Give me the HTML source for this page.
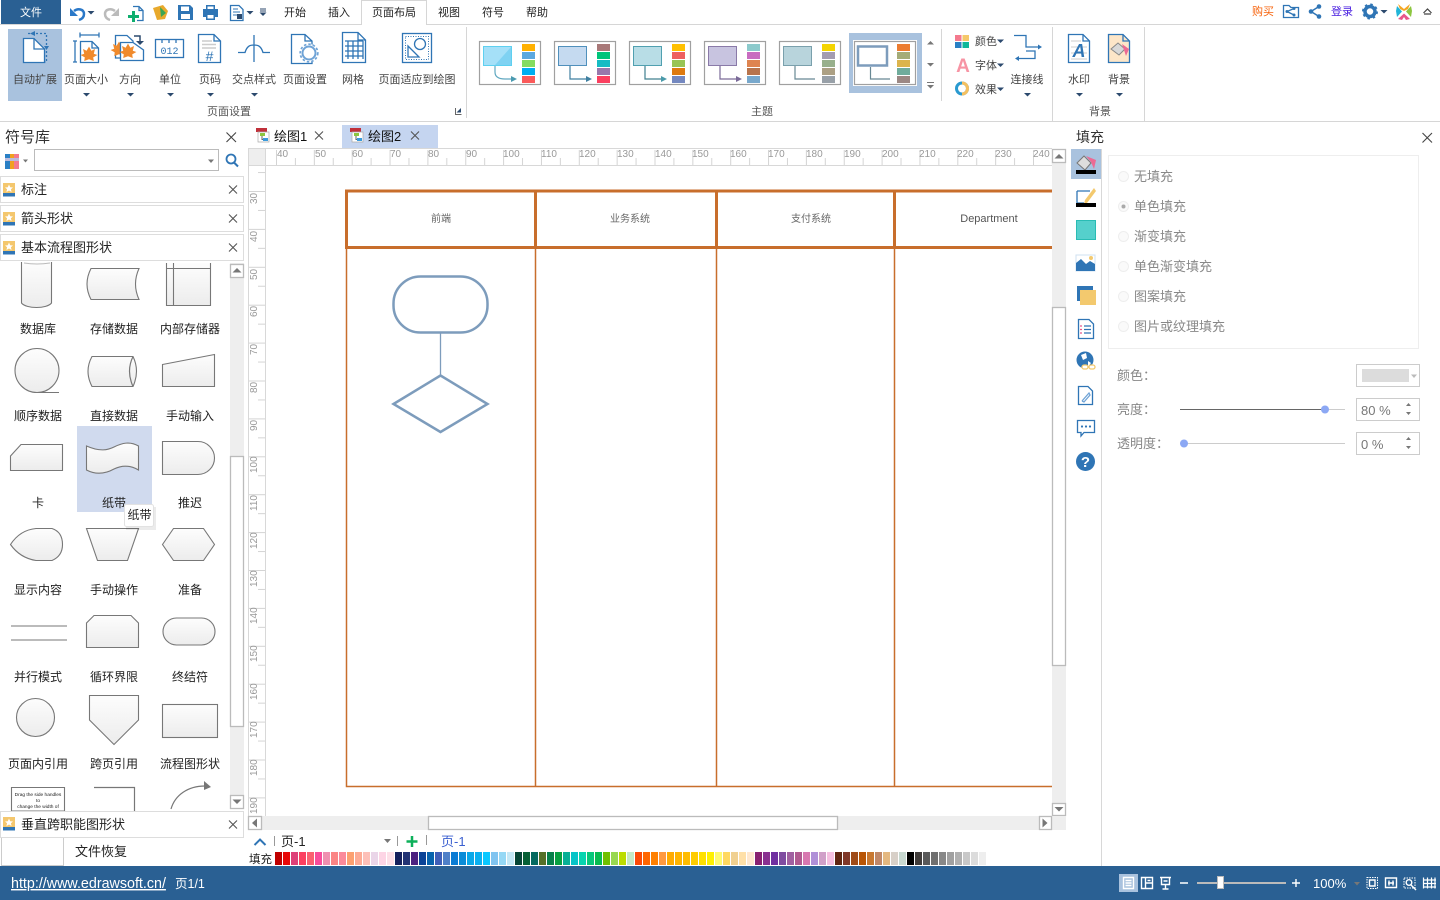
<!DOCTYPE html>
<html lang="zh"><head><meta charset="utf-8"><title>Edraw</title>
<style>
html,body{margin:0;padding:0;background:#fff;width:1440px;height:900px;overflow:hidden}
svg{display:block;font-family:"Liberation Sans","Noto Sans CJK SC",sans-serif}
text{fill:#333;font-size:11px}
.m{text-anchor:middle}
.r{font-size:11px;fill:#444}
.n{font-size:12px;fill:#222;text-anchor:middle}
.h{font-size:13px;fill:#222}
.g{font-size:13px;fill:#888}
.u{font-size:10px;fill:#999}
.b{fill:none;stroke:#2f75b5;stroke-width:1.3}
.p{fill:#fff;stroke:#2f75b5;stroke-width:1.3}
.sh{fill:url(#sg);stroke:#777;stroke-width:1.1}
.x{fill:none;stroke:#555;stroke-width:1.2}
.o{fill:#f08a2c}
.s{y:852px;width:7px;height:13px}
.w{fill:#fff;font-size:13px}
.wi{fill:none;stroke:#fff;stroke-width:1.4}
.bar{fill:#fff;stroke:#bbb;stroke-width:1.3}
.ar{fill:#777}
.d{fill:#2c4a6e}
</style></head><body>
<svg width="1440" height="900" viewBox="0 0 1440 900" xmlns="http://www.w3.org/2000/svg">
<defs>
<linearGradient id="sg" x1="0" y1="0" x2="0" y2="1"><stop offset="0" stop-color="#fdfdfd"/><stop offset="1" stop-color="#ececec"/></linearGradient>
<pattern id="hr" x="276" y="149" width="37.85" height="16" patternUnits="userSpaceOnUse"><path d="M.5 1V16M19.4 9V16" stroke="#d4d4d4" fill="none"/></pattern>
<pattern id="vr" x="248" y="191" width="17" height="37.9" patternUnits="userSpaceOnUse"><path d="M1 .5H17M10 19.4H17" stroke="#d4d4d4" fill="none"/></pattern>
<g id="leaf"><path class="o" transform="scale(1.2)" d="M0-7L2-3.500 5-5 4-1 7 0 3.500 2 4 5 0 3.500-4 5-3.500 2-7 0-4-1-5-5-2-3.500Z"/></g>
<g id="star"><rect x="0" y="0" width="12" height="10" fill="#f4c76e"/><rect x="0" y="10" width="12" height="3.500" fill="#2f75b5"/><path fill="#fff" d="M6 1.500L7.200 4.300 10 4.500 7.900 6.300 8.600 9 6 7.500 3.400 9 4.100 6.300 2 4.500 4.800 4.300Z"/></g>
<g id="di"><path fill="#c0303a" d="M-7-7h11v4h-11z"/><path fill="#fff" stroke="#aaa" stroke-width=".7" d="M-5-3H6V7H-5Z"/><path fill="#8cc63f" d="M-3-2h5v3h-5z"/><path fill="#3a9bdc" d="M0 3h5v3H0z"/><path stroke="#666" fill="none" d="M-1 1V4.500H0"/></g>
<g id="ts"><path fill="#2c4a6e" d="M-3.500 0H3.500L0 3.500Z"/></g>
<g id="tick"><path class="ar" d="M-4 0H4L0 3.500Z"/></g>
<g id="xx"><path d="M-4-4L4 4M4-4L-4 4" stroke="#555" stroke-width="1.100" fill="none"/></g>
</defs>

<!-- Top bar -->
<rect x="1" y="0" width="60" height="24" fill="#2a6093"/>
<text x="31" y="16" class="m" style="fill:#fff;font-size:11px">文件</text>
<path d="M0 24.500H361M427 24.500H1440" stroke="#d6d6d6"/>
<path d="M361.500 25V.5H426.500V25" fill="#fff" stroke="#d6d6d6"/>
<text x="295" y="16" class="m" style="fill:#222">开始</text>
<text x="339" y="16" class="m" style="fill:#222">插入</text>
<text x="394" y="16" class="m" style="fill:#222">页面布局</text>
<text x="449" y="16" class="m" style="fill:#222">视图</text>
<text x="493" y="16" class="m" style="fill:#222">符号</text>
<text x="537" y="16" class="m" style="fill:#222">帮助</text>

<!-- Quick access -->
<path d="M74 11C78 8 84 9 84 14 84 17 82 19 79 20" fill="none" stroke="#2a78c8" stroke-width="2.500"/><path fill="#2a78c8" d="M70 8V16H78Z"/>
<use href="#ts" x="91" y="11"/>
<path d="M115 11C111 8 105 9 105 14 105 17 107 19 110 20" fill="none" stroke="#bbb" stroke-width="2.500"/><path fill="#bbb" d="M119 8V16H111Z"/>
<path class="b" d="M133 6.500H139L143 10.500V20.500H137"/><path class="b" d="M139 6.500V10.500H143"/>
<path fill="#0fae6e" d="M132 11h3v4h4v3h-4v4h-3v-4h-4v-3h4z"/>
<path fill="#e8a92c" d="M153 8L163 5 168 11 165 19 157 20Z"/><path fill="#3aa655" d="M160 7L166 13 161 17Z"/>
<path fill="#2f75b5" d="M178 5H190L193 8V20H178Z"/><path fill="#fff" d="M181 6.500H189V11H181ZM181 14H190V19H181Z"/>
<path fill="#2f75b5" d="M206 5H215V9H218V17H215V20H206V17H203V9H206Z"/><path fill="#fff" d="M207.500 6.500H213.500V9H207.500ZM207.500 15H213.500V18.500H207.500Z"/>
<path class="p" d="M230.500 5.500H239L243 9.500V20.500H230.500Z"/><path d="M233 9h5M233 12h7M233 15h4" stroke="#2f75b5" fill="none"/><path fill="#2c4a6e" d="M237 14h5v5h-5z"/>
<use href="#ts" x="250" y="11"/>
<path d="M260 9h6M260 11h6" stroke="#2c4a6e"/><use href="#ts" x="263" y="12.500"/>

<!-- Top right -->
<text x="1263" y="15" class="m" style="fill:#f7630c">购买</text>
<path class="b" d="M1283.500 5.500H1289L1291 7.500H1298.500V17.500H1283.500Z"/>
<circle cx="1287" cy="11.500" r="1.500" fill="#2f75b5"/><circle cx="1294" cy="8.500" r="1.500" fill="#2f75b5"/><circle cx="1294" cy="15" r="1.500" fill="#2f75b5"/><path class="b" d="M1294 8.500L1287 11.500 1294 15"/>
<circle cx="1311" cy="11.500" r="2.300" fill="#2f75b5"/><circle cx="1319" cy="6.500" r="2.300" fill="#2f75b5"/><circle cx="1319" cy="16.500" r="2.300" fill="#2f75b5"/><path d="M1319 6.500L1311 11.500 1319 16.500" fill="none" stroke="#2f75b5" stroke-width="1.500"/>
<text x="1342" y="15" class="m" style="fill:#4a1fe0">登录</text>
<circle cx="1370" cy="11.500" r="5" fill="none" stroke="#2f75b5" stroke-width="3.500"/><circle cx="1370" cy="11.500" r="7" fill="none" stroke="#2f75b5" stroke-width="2" stroke-dasharray="2.500 3"/>
<use href="#ts" x="1384" y="10"/>
<path fill="#f5a623" d="M1398 4L1404 9 1410 4 1408 9 1404 11 1400 9Z"/><path fill="#8cc63f" d="M1411 6L1406 11.500 1411 17 1412 11Z"/><path fill="#e8568a" d="M1398 19L1404 13.500 1410 19 1406 20 1404 17 1402 20Z"/><path fill="#22b5d8" d="M1397 6L1402 11.500 1397 17 1396 11Z"/>
<path d="M1423.500 13L1427.500 9 1431.500 13M1424 14H1431" fill="none" stroke="#444" stroke-width="1.200"/>

<!-- Ribbon -->
<path d="M0 121.500H1440" stroke="#d6d6d6"/>
<path d="M466.500 27V118M941.500 29V101M1052.500 27V121M1144.500 27V121" stroke="#d6d6d6"/>
<rect x="8" y="29" width="54" height="72" fill="#a9c2de"/>
<path class="p" d="M23.500 38.500H34L44.500 49V62.500H23.500Z"/><path class="b" d="M34 38.500V49H44.500"/>
<path class="b" d="M28 33.500H46.500V62H44" stroke-dasharray="2 2"/><path fill="#2f75b5" d="M30 33.500L35 31V36ZM46.500 50L44 46H49Z"/>
<!-- 页面大小 -->
<path class="b" d="M80 35H99M80 32.500V37.500M99 32.500V37.500M75 41V62M73 41H77M73 62H77"/>
<path class="p" d="M80.500 41.500H92L98.500 48V62.500H80.500Z"/><path class="b" d="M92 41.500V48H98.500"/>
<use href="#leaf" x="89" y="55"/>
<!-- 方向 -->
<path class="p" d="M115.500 35.500H127L133 41V58H115.500Z"/><use href="#leaf" x="119" y="50"/>
<path class="p" d="M120.500 42.500H133L143.500 50V60.500H120.500Z"/><use href="#leaf" x="128" y="52"/>
<path d="M134 36H140V42" fill="none" stroke="#2c4a6e" stroke-width="1.500"/><path fill="#2c4a6e" d="M136 41H144L140 45Z"/>
<!-- 单位 -->
<rect x="155.500" y="39.500" width="28" height="18" class="p"/>
<path class="b" d="M162 40V43M169 40V43M176 40V43"/>
<text x="169.500" y="54" class="m" style="font-family:'Liberation Mono',monospace;font-size:10px;fill:#2f75b5">012</text>
<!-- 页码 -->
<path class="p" d="M198.500 34.500H214L220.500 41V62.500H198.500Z"/><path class="b" d="M214 34.500V41H220.500"/>
<path d="M202 41H212M202 44.500H216M202 48H216" stroke="#ccc" stroke-width="1.500"/>
<text x="209.500" y="61" class="m" style="font-size:14px;fill:#2f75b5">#</text>
<!-- 交点样式 -->
<path class="b" d="M254 35V62M238 52.500H245C247 46 250 45 254 45S261 46 263 52.500H270"/>
<!-- 页面设置 -->
<path class="p" d="M291.500 34.500H305L312 41V63.500H291.500Z"/><path class="b" d="M305 34.500V41H312"/>
<circle cx="309" cy="53" r="9" fill="#fff"/><circle cx="309" cy="53" r="6.500" fill="none" stroke="#6fa3d6" stroke-width="2"/><circle cx="309" cy="53" r="8.800" fill="none" stroke="#6fa3d6" stroke-width="1.700" stroke-dasharray="2.500 2"/>
<!-- 网格 -->
<path class="p" d="M342.500 32.500H358L365.500 40V62.500H342.500Z"/><path class="b" d="M358 32.500V40H365.500"/>
<path class="b" d="M345 41H363M345 46H363M345 51H363M345 56H363M348 41V59M353 41V59M358 41V59M363 41V59"/>
<!-- 页面适应 -->
<rect x="402.500" y="33.500" width="29" height="29" class="p"/>
<rect x="405.500" y="36.500" width="23" height="23" fill="none" stroke="#2f75b5" stroke-dasharray="1 1.500"/>
<circle cx="420" cy="44" r="5.500" class="p"/><path class="p" d="M408 57V46L419 57Z"/>
<!-- Ribbon labels -->
<text x="35" y="83" class="r m">自动扩展</text>
<text x="86" y="83" class="r m">页面大小</text>
<text x="130" y="83" class="r m">方向</text>
<text x="170" y="83" class="r m">单位</text>
<text x="210" y="83" class="r m">页码</text>
<text x="254" y="83" class="r m">交点样式</text>
<text x="305" y="83" class="r m">页面设置</text>
<text x="353" y="83" class="r m">网格</text>
<text x="417" y="83" class="r m">页面适应到绘图</text>
<use href="#ts" x="86.500" y="93"/><use href="#ts" x="130.500" y="93"/><use href="#ts" x="170.500" y="93"/><use href="#ts" x="210.500" y="93"/><use href="#ts" x="254.500" y="93"/>
<text x="229" y="115" class="r m" style="fill:#555">页面设置</text>
<path d="M455.500 108V114.500H461.500" fill="none" stroke="#666"/><path fill="#2c4a6e" d="M457 108L461.500 112.500V108Z" transform="rotate(90 459 110)"/>

<!-- Themes -->
<rect x="849" y="33" width="73" height="60" fill="#a9c2de"/>
<rect x="853" y="40" width="64" height="46" fill="#fff"/>
<g fill="#fff" stroke="#a0a0a0" stroke-width="1.200">
<rect x="479.500" y="41.500" width="61" height="43"/><rect x="554.500" y="41.500" width="61" height="43"/><rect x="629.500" y="41.500" width="61" height="43"/><rect x="704.500" y="41.500" width="61" height="43"/><rect x="779.500" y="41.500" width="61" height="43"/><rect x="854.500" y="41.500" width="61" height="43"/>
</g>
<path fill="#a5e0f8" stroke="#5ed0f0" d="M483.500 46.500H511.500V65.500H483.500Z"/><path fill="#7fd2f2" d="M495 65L511 47V65Z"/>
<path fill="none" stroke="#60a8c0" stroke-width="1.200" d="M495 66V72Q495 79 505 79H515"/><path fill="#4a9ab0" d="M511 76L517 79 511 82Z"/>
<path fill="#c5daf0" stroke="#5090bc" d="M558.500 46.500H586.500V65.500H558.500Z"/><path fill="none" stroke="#3f7fa0" stroke-width="1.200" d="M570 66V79H590"/><path fill="#3f7fa0" d="M586 76L592 79 586 82Z"/>
<path fill="#b8dde6" stroke="#50a0b0" d="M633.500 46.500H661.500V65.500H633.500Z"/><path fill="none" stroke="#40808f" stroke-width="1.200" d="M645 66V79H665"/><path fill="#4a9aaa" d="M661 76L667 79 661 82Z"/>
<path fill="#c8c4e0" stroke="#8a7aa8" d="M708.500 46.500H736.500V65.500H708.500Z"/><path fill="none" stroke="#7a6a98" stroke-width="1.200" d="M720 66V79H740"/><path fill="#7a6a98" d="M736 76L742 79 736 82Z"/>
<path fill="#b8d4dc" stroke="#7aa0ac" d="M783.500 46.500H811.500V65.500H783.500Z"/><path fill="none" stroke="#688894" stroke-width="1.200" d="M795 66V79H815"/>
<path fill="#fff" stroke="#7d9cbc" stroke-width="2.500" d="M858 46.500H887V65.500H858Z"/><path fill="none" stroke="#688894" stroke-width="1.200" d="M870.500 67V79H890"/>
<g>
<rect x="522" y="44" width="13" height="7" fill="#ffb000"/><rect x="522" y="52" width="13" height="7" fill="#5ba8e0"/><rect x="522" y="60" width="13" height="7" fill="#84dc60"/><rect x="522" y="68" width="13" height="7" fill="#00aef0"/><rect x="522" y="76" width="13" height="7" fill="#fb5a5a"/>
<rect x="597" y="44" width="13" height="7" fill="#a87878"/><rect x="597" y="52" width="13" height="7" fill="#00c47a"/><rect x="597" y="60" width="13" height="7" fill="#15bcc4"/><rect x="597" y="68" width="13" height="7" fill="#9878ac"/><rect x="597" y="76" width="13" height="7" fill="#fb4060"/>
<rect x="672" y="44" width="13" height="7" fill="#ffc000"/><rect x="672" y="52" width="13" height="7" fill="#ee6060"/><rect x="672" y="60" width="13" height="7" fill="#98c454"/><rect x="672" y="68" width="13" height="7" fill="#de7a10"/><rect x="672" y="76" width="13" height="7" fill="#7488c0"/>
<rect x="747" y="44" width="13" height="7" fill="#8ccacc"/><rect x="747" y="52" width="13" height="7" fill="#c86cc0"/><rect x="747" y="60" width="13" height="7" fill="#de8450"/><rect x="747" y="68" width="13" height="7" fill="#b8744c"/><rect x="747" y="76" width="13" height="7" fill="#78a8cc"/>
<rect x="822" y="44" width="13" height="7" fill="#f4d400"/><rect x="822" y="52" width="13" height="7" fill="#a49cb0"/><rect x="822" y="60" width="13" height="7" fill="#98b08c"/><rect x="822" y="68" width="13" height="7" fill="#aca084"/><rect x="822" y="76" width="13" height="7" fill="#98a0a8"/>
<rect x="897" y="44" width="13" height="7" fill="#ec7c30"/><rect x="897" y="52" width="13" height="7" fill="#a4ac78"/><rect x="897" y="60" width="13" height="7" fill="#dcb44c"/><rect x="897" y="68" width="13" height="7" fill="#70ac9c"/><rect x="897" y="76" width="13" height="7" fill="#9c8884"/>
</g>
<path class="ar" d="M927 44.500L930.500 41 934 44.500ZM927 63H934L930.500 66.500ZM927 82H934V83H927ZM927 85H934L930.500 88.500Z"/>
<text x="762" y="115" class="r m" style="fill:#555">主题</text>

<!-- Color/font/effect -->
<rect x="955" y="35" width="6.500" height="6" fill="#f47a8e"/><rect x="962.500" y="35" width="6.500" height="6" fill="#f5c86a"/><rect x="955" y="42" width="6.500" height="6" fill="#2a80c5"/><rect x="962.500" y="42" width="6.500" height="6" fill="#10b89a"/>
<text x="963" y="72" class="m" style="font-size:19px;font-weight:bold;fill:#f794a4">A</text>
<circle cx="962" cy="88.500" r="5.500" fill="none" stroke="#2a9ad0" stroke-width="3"/><path d="M962 83A5.500 5.500 0 0 1 962 94" fill="none" stroke="#f5c060" stroke-width="3"/>
<text x="975" y="45" class="r">颜色</text><text x="975" y="69" class="r">字体</text><text x="975" y="93" class="r">效果</text>
<use href="#ts" x="1000.500" y="39.500"/><use href="#ts" x="1000.500" y="63.500"/><use href="#ts" x="1000.500" y="87.500"/>
<path class="b" d="M1014 35.500H1026V47H1040M1026 51H1035V58.500H1017"/><path fill="#2f75b5" d="M1038 44.500L1042 47 1038 49.500ZM1019 56L1015 58.500 1019 61Z"/>
<text x="1027" y="83" class="r m">连接线</text><use href="#ts" x="1027.500" y="93"/>
<!-- watermark / bg -->
<path class="p" d="M1068.500 34.500H1083L1089.500 41V62.500H1068.500Z"/><path class="b" d="M1083 34.500V41H1089.500"/><path d="M1071 41H1081M1071 47H1087M1071 53H1087M1071 59H1087" stroke="#ddd" stroke-width="1.500"/>
<text x="1079" y="57" class="m" style="font-size:18px;font-weight:bold;font-style:italic;fill:#2f75b5">A</text>
<path fill="#fde6c8" stroke="#2f75b5" stroke-width="1.300" d="M1108.500 34.500H1123L1129.500 41V62.500H1108.500Z"/><path class="b" d="M1123 34.500V41H1129.500"/>
<path fill="#d8d8d8" stroke="#888" d="M1111 49L1118 43 1125 49 1119 55Z"/><path fill="#ec6a94" d="M1122 44L1129 49 1126 56 1124 50Z"/>
<text x="1079" y="83" class="r m">水印</text><text x="1119" y="83" class="r m">背景</text>
<use href="#ts" x="1079.500" y="93"/><use href="#ts" x="1119.500" y="93"/>
<text x="1100" y="115" class="r m" style="fill:#555">背景</text>

<!-- Document tabs -->
<rect x="342" y="125" width="96" height="23" fill="#c5d5f0"/>
<use href="#di" x="263" y="135"/><use href="#di" x="357" y="135"/>
<text x="274" y="141" class="h" style="fill:#111">绘图1</text><text x="368" y="141" class="h" style="fill:#111">绘图2</text>
<use href="#xx" x="319" y="135.500"/><use href="#xx" x="415" y="135.500"/>

<!-- Rulers -->
<rect x="248" y="149" width="17" height="16" fill="#eee"/>
<rect x="265" y="149" width="787" height="16" fill="url(#hr)"/>
<rect x="248" y="165" width="17" height="651" fill="url(#vr)"/>
<path d="M248 148.500H1052M248 165.500H1052M265.500 149V816M248.500 149V816" stroke="#d8d8d8" fill="none"/>
<g class="rl">
<text x="277" y="157" class="u">40</text><text x="315" y="157" class="u">50</text><text x="352" y="157" class="u">60</text><text x="390" y="157" class="u">70</text><text x="428" y="157" class="u">80</text><text x="466" y="157" class="u">90</text><text x="503" y="157" class="u">100</text><text x="541" y="157" class="u">110</text><text x="579" y="157" class="u">120</text><text x="617" y="157" class="u">130</text><text x="655" y="157" class="u">140</text><text x="692" y="157" class="u">150</text><text x="730" y="157" class="u">160</text><text x="768" y="157" class="u">170</text><text x="806" y="157" class="u">180</text><text x="844" y="157" class="u">190</text><text x="882" y="157" class="u">200</text><text x="919" y="157" class="u">210</text><text x="957" y="157" class="u">220</text><text x="995" y="157" class="u">230</text><text x="1033" y="157" class="u">240</text>
<text transform="translate(257 204) rotate(-90)" class="u">30</text><text transform="translate(257 242) rotate(-90)" class="u">40</text><text transform="translate(257 280) rotate(-90)" class="u">50</text><text transform="translate(257 317) rotate(-90)" class="u">60</text><text transform="translate(257 355) rotate(-90)" class="u">70</text><text transform="translate(257 393) rotate(-90)" class="u">80</text><text transform="translate(257 431) rotate(-90)" class="u">90</text><text transform="translate(257 473) rotate(-90)" class="u">100</text><text transform="translate(257 511) rotate(-90)" class="u">110</text><text transform="translate(257 549) rotate(-90)" class="u">120</text><text transform="translate(257 587) rotate(-90)" class="u">130</text><text transform="translate(257 624) rotate(-90)" class="u">140</text><text transform="translate(257 662) rotate(-90)" class="u">150</text><text transform="translate(257 700) rotate(-90)" class="u">160</text><text transform="translate(257 738) rotate(-90)" class="u">170</text><text transform="translate(257 776) rotate(-90)" class="u">180</text><text transform="translate(257 814) rotate(-90)" class="u">190</text>
</g>

<!-- Swimlane -->
<g fill="none" stroke="#c86e2c">
<path stroke-width="1.500" d="M346.500 248V786.500H1052M535.500 248V786M716.500 248V786M894.500 248V786"/>
<path stroke-width="3" d="M1052 191H346.500V247.500H1052M535.500 191V247M716.500 191V247M894.500 191V247"/>
</g>
<text x="441" y="222" class="m" style="font-size:10px;fill:#666">前端</text>
<text x="630" y="222" class="m" style="font-size:10px;fill:#666">业务系统</text>
<text x="811" y="222" class="m" style="font-size:10px;fill:#666">支付系统</text>
<text x="989" y="222" class="m" style="font-size:11px;fill:#555">Department</text>
<rect x="393.500" y="276.500" width="94" height="56" rx="27" fill="#fff" stroke="#7d9cbc" stroke-width="2.500"/>
<path d="M440.500 333V375" stroke="#7d9cbc" stroke-width="1.300"/>
<path d="M393.500 404L440.500 375.500 487.500 404 440.500 432Z" fill="#fff" stroke="#7d9cbc" stroke-width="2.500"/>

<!-- Canvas scrollbars -->
<rect x="1052" y="149" width="14" height="667" fill="#eee"/>
<rect x="1052.500" y="307.500" width="13" height="358" class="bar"/>
<rect x="1052.500" y="149.500" width="13" height="13" class="bar"/><path class="ar" d="M1054.500 158.500L1059 154 1063.500 158.500Z"/>
<rect x="1052.500" y="803.500" width="13" height="12" class="bar"/><path class="ar" d="M1054.500 807H1063.500L1059 811.500Z"/>
<rect x="248" y="816" width="818" height="14" fill="#eee"/>
<rect x="428.500" y="816.500" width="409" height="13" class="bar"/>
<rect x="248.500" y="816.500" width="13" height="13" class="bar"/><path class="ar" d="M252 823L257 818.500V827.500Z"/>
<rect x="1039.500" y="816.500" width="12" height="13" class="bar"/><path class="ar" d="M1047.500 823L1042.500 818.500V827.500Z"/>

<!-- Page tabs -->
<path d="M254.500 845L260 839.500 265.500 845" fill="none" stroke="#2f75b5" stroke-width="2"/>
<path d="M274.500 836V846M397.500 836V846M426.500 835V845" stroke="#999"/>
<text x="281" y="846" class="h" style="fill:#222">页-1</text>
<path class="ar" d="M384 839H391L387.500 843Z"/>
<path d="M412 836V847M406.500 841.500H417.500" stroke="#0db05a" stroke-width="2.500"/>
<text x="441" y="846" class="h" style="fill:#3a5fd0">页-1</text>
<text x="249" y="863" style="font-size:11.500px;fill:#222">填充</text>
<g>
<rect class="s" x="275" fill="#c00000"/><rect class="s" x="283" fill="#e80808"/><rect class="s" x="291" fill="#de4078"/><rect class="s" x="299" fill="#fb4060"/><rect class="s" x="307" fill="#fa6070"/><rect class="s" x="315" fill="#f84d9b"/><rect class="s" x="323" fill="#ef90b0"/><rect class="s" x="331" fill="#fb8585"/><rect class="s" x="339" fill="#fb8a9a"/><rect class="s" x="347" fill="#fca070"/><rect class="s" x="355" fill="#fdab95"/><rect class="s" x="363" fill="#fdc0b8"/><rect class="s" x="371" fill="#ead5e8"/><rect class="s" x="379" fill="#fdd5e5"/><rect class="s" x="387" fill="#fde0e8"/>
<rect class="s" x="395" fill="#14205c"/><rect class="s" x="403" fill="#223374"/><rect class="s" x="411" fill="#4b2180"/><rect class="s" x="419" fill="#0a4397"/><rect class="s" x="427" fill="#0763ad"/><rect class="s" x="435" fill="#3f5fb8"/><rect class="s" x="443" fill="#4f80c8"/><rect class="s" x="451" fill="#0a7cd4"/><rect class="s" x="459" fill="#0a8cd8"/><rect class="s" x="467" fill="#0aa8e8"/><rect class="s" x="475" fill="#0ab0f0"/><rect class="s" x="483" fill="#0ac8ff"/><rect class="s" x="491" fill="#80c4f0"/><rect class="s" x="499" fill="#95d8f5"/><rect class="s" x="507" fill="#c5e8f5"/>
<rect class="s" x="515" fill="#064535"/><rect class="s" x="523" fill="#066035"/><rect class="s" x="531" fill="#056a60"/><rect class="s" x="539" fill="#557028"/><rect class="s" x="547" fill="#07804a"/><rect class="s" x="555" fill="#07a040"/><rect class="s" x="563" fill="#07b095"/><rect class="s" x="571" fill="#07c4c8"/><rect class="s" x="579" fill="#07d4b0"/><rect class="s" x="587" fill="#07c87a"/><rect class="s" x="595" fill="#07bc50"/><rect class="s" x="603" fill="#70c000"/><rect class="s" x="611" fill="#98d850"/><rect class="s" x="619" fill="#bcdc00"/><rect class="s" x="627" fill="#c5e8c5"/>
<rect class="s" x="635" fill="#fb4a05"/><rect class="s" x="643" fill="#ff6600"/><rect class="s" x="651" fill="#ff8000"/><rect class="s" x="659" fill="#ff9a40"/><rect class="s" x="667" fill="#ffab00"/><rect class="s" x="675" fill="#ffb400"/><rect class="s" x="683" fill="#ffbc00"/><rect class="s" x="691" fill="#ffcc00"/><rect class="s" x="699" fill="#ffe000"/><rect class="s" x="707" fill="#fff000"/><rect class="s" x="715" fill="#fffa70"/><rect class="s" x="723" fill="#ffd860"/><rect class="s" x="731" fill="#f0d090"/><rect class="s" x="739" fill="#ffe0a8"/><rect class="s" x="747" fill="#ffe8d0"/>
<rect class="s" x="755" fill="#882070"/><rect class="s" x="763" fill="#8a3090"/><rect class="s" x="771" fill="#7030a0"/><rect class="s" x="779" fill="#7f4ca0"/><rect class="s" x="787" fill="#a060a0"/><rect class="s" x="795" fill="#b05a90"/><rect class="s" x="803" fill="#d878b0"/><rect class="s" x="811" fill="#b090d8"/><rect class="s" x="819" fill="#d0a0c8"/><rect class="s" x="827" fill="#f5c0e0"/>
<rect class="s" x="835" fill="#602510"/><rect class="s" x="843" fill="#803828"/><rect class="s" x="851" fill="#a04c18"/><rect class="s" x="859" fill="#b85505"/><rect class="s" x="867" fill="#c87830"/><rect class="s" x="875" fill="#c08868"/><rect class="s" x="883" fill="#e4b880"/><rect class="s" x="891" fill="#d8d0c8"/><rect class="s" x="899" fill="#c8d8d0"/>
<rect class="s" x="907" fill="#000"/><rect class="s" x="915" fill="#403c3a"/><rect class="s" x="923" fill="#5a5a5a"/><rect class="s" x="931" fill="#707070"/><rect class="s" x="939" fill="#888"/><rect class="s" x="947" fill="#a0a0a0"/><rect class="s" x="955" fill="#b0b0b0"/><rect class="s" x="963" fill="#c8c8c8"/><rect class="s" x="971" fill="#dcdcdc"/><rect class="s" x="979" fill="#eee"/>
</g>

<!-- Left panel shapes -->
<rect x="77" y="426" width="75" height="86" fill="#d0daee"/>
<path class="sh" d="M21.500 262V303C26 309 47 309 51.500 303V262"/><path fill="none" stroke="#bbb" d="M24 263Q37 265 50 263"/>
<path class="sh" d="M91 268.500H139Q132 284 139 299.500H91Q83 284 91 268.500Z"/>
<path class="sh" d="M166.500 263V305.500H210.500V263M166.500 268.500H210.500M173.500 263V305.500"/>
<circle cx="37" cy="370.500" r="22" class="sh"/><path d="M37 392.500H59" stroke="#777" fill="none"/>
<path class="sh" d="M92 356.500H133Q140 371 133 386.500H92Q84 371 92 356.500Z"/><path class="x" style="stroke:#777" d="M133 356.500Q126 371 133 386.500"/>
<path class="sh" d="M162.500 364.500L214.500 354.500V386.500H162.500Z"/>
<path class="sh" d="M21 444.500H62.500V470.500H10.500V456Z"/>
<path class="sh" d="M86.500 446C100 452 108 450 114 447 122 443 130 441 138.500 446V470C130 465 122 465 114 469 105 474 96 475 86.500 470Z"/>
<path class="sh" d="M162.500 441.500H198A16.500 16.500 0 0 1 198 474.500H162.500Z"/>
<path class="sh" d="M10.500 544.500Q20 530 36 528.500H52Q62.500 532 62.500 544.500 62.500 556 52 560.500H36Q20 558 10.500 544.500Z"/>
<path class="sh" d="M86.500 528.500H138.500L127.500 560.500H97.500Z"/>
<path class="sh" d="M162.500 544.500L173.500 528.500H203.500L214.500 544.500 203.500 560.500H173.500Z"/>
<path d="M11 626H67M11 640H67" stroke="#777" stroke-width="1.100"/>
<path class="sh" d="M94 615.500H131L138.500 623V647.500H86.500V623Z"/>
<rect x="163" y="618" width="52" height="27" rx="13.500" class="sh"/>
<circle cx="35.500" cy="717.500" r="19" class="sh"/>
<path class="sh" d="M89.500 695.500H138.500V720L114 744.500 89.500 720Z"/>
<rect x="162.500" y="704.500" width="55" height="33" class="sh"/>
<path class="sh" style="fill:#fff" d="M11.500 787.500H64.500V811H11.500Z"/>
<text x="38" y="796" class="m" style="font-size:4.800px;fill:#222">Drag the side handles</text><text x="38" y="802" class="m" style="font-size:4.800px;fill:#222">to</text><text x="38" y="808" class="m" style="font-size:4.800px;fill:#222">change the width of</text>
<path class="x" style="stroke:#777" d="M94 787.500H134.500V811"/>
<path class="x" style="stroke:#777;stroke-width:1.200" d="M171 809C175 795 188 786 205 786"/><path class="ar" d="M204 781L211 787 204 790Z"/>

<text x="38" y="333" class="n">数据库</text><text x="114" y="333" class="n">存储数据</text><text x="190" y="333" class="n">内部存储器</text>
<text x="38" y="420" class="n">顺序数据</text><text x="114" y="420" class="n">直接数据</text><text x="190" y="420" class="n">手动输入</text>
<text x="38" y="507" class="n">卡</text><text x="114" y="507" class="n">纸带</text><text x="190" y="507" class="n">推迟</text>
<text x="38" y="594" class="n">显示内容</text><text x="114" y="594" class="n">手动操作</text><text x="190" y="594" class="n">准备</text>
<text x="38" y="681" class="n">并行模式</text><text x="114" y="681" class="n">循环界限</text><text x="190" y="681" class="n">终结符</text>
<text x="38" y="768" class="n">页面内引用</text><text x="114" y="768" class="n">跨页引用</text><text x="190" y="768" class="n">流程图形状</text>

<!-- tooltip -->
<rect x="126" y="507" width="30" height="23" fill="#000" opacity=".08"/>
<rect x="124.500" y="504.500" width="29" height="22" rx="2" fill="#fff" stroke="#e2e2e2"/>
<text x="139.500" y="519" class="n">纸带</text>

<!-- Left panel scrollbar -->
<rect x="230" y="263" width="14" height="546" fill="#eee"/>
<rect x="230.500" y="456.500" width="13" height="270" class="bar"/>
<rect x="230.500" y="264.500" width="13" height="13" class="bar"/><path class="ar" d="M232.500 272.500L237 268 241.500 272.500Z"/>
<rect x="230.500" y="795.500" width="13" height="13" class="bar"/><path class="ar" d="M232.500 799.500H241.500L237 804Z"/>

<!-- Left panel header -->
<rect x="0" y="125" width="247" height="136" fill="#fff"/>
<text x="5" y="142" style="font-size:15px;fill:#333">符号库</text>
<path d="M226.500 132.500L236 142M236 132.500L226.500 142" stroke="#444" stroke-width="1.100" fill="none"/>
<rect x="5" y="154" width="5" height="15" fill="#2a80c5"/><rect x="10" y="154" width="4" height="15" fill="#f0a020"/><rect x="14" y="154" width="5" height="15" fill="#f47a8e"/><rect x="5" y="158" width="14" height="3" fill="#bbd"/>
<path class="ar" d="M23 159.500H28L25.500 162.500Z"/>
<rect x="34.500" y="149.500" width="184" height="21" fill="#fff" stroke="#bbb"/>
<path class="ar" d="M208 159.500H214L211 163Z"/>
<circle cx="231" cy="159" r="4.500" fill="none" stroke="#2f75b5" stroke-width="1.800"/><path d="M234 162.500L238 166.500" stroke="#2f75b5" stroke-width="2"/>
<g fill="#fff" stroke="#ddd">
<rect x=".5" y="176.500" width="243" height="26"/><rect x=".5" y="205.500" width="243" height="26"/><rect x=".5" y="234.500" width="243" height="26"/>
</g>
<use href="#star" x="3" y="183"/><use href="#star" x="3" y="212"/><use href="#star" x="3" y="241"/>
<text x="21" y="194" class="h">标注</text><text x="21" y="223" class="h">箭头形状</text><text x="21" y="252" class="h">基本流程图形状</text>
<use href="#xx" x="233" y="189.500"/><use href="#xx" x="233" y="218.500"/><use href="#xx" x="233" y="247.500"/>

<!-- Left panel bottom -->
<rect x="0" y="811" width="247" height="55" fill="#fff"/>
<rect x=".5" y="811.500" width="243" height="26" fill="#fff" stroke="#ddd"/>
<use href="#star" x="3" y="817"/><text x="21" y="829" class="h">垂直跨职能图形状</text><use href="#xx" x="233" y="824.500"/>
<path d="M1.500 838V865.500H63.500V838" fill="none" stroke="#ccc"/>
<text x="75" y="856" class="h">文件恢复</text>

<!-- Right panel -->
<path d="M1101.500 149V866" stroke="#d8d8d8"/>
<text x="1076" y="142" style="font-size:14px;fill:#333">填充</text>
<path d="M1422.500 133L1432 142.500M1432 133L1422.500 142.500" stroke="#444" stroke-width="1.100" fill="none"/>
<rect x="1071" y="149" width="30" height="30" fill="#a9c2de"/>
<path fill="#ddd" stroke="#777" d="M1077 163L1084 156 1091 163 1085 170Z"/><path fill="#ec6a94" d="M1086 156L1096 160 1094 169 1091 162Z"/><rect x="1076" y="170" width="20" height="4" fill="#000"/>
<path class="b" d="M1077 191H1090M1077 191V203H1084"/><path fill="#f3c96e" d="M1094 188L1096 191 1087 203 1084 204 1085 200Z"/><rect x="1076" y="203" width="20" height="4" fill="#000"/>
<rect x="1076.500" y="220.500" width="19" height="19" fill="#55d0cc" stroke="#2abcb4"/>
<rect x="1076" y="255" width="19" height="16" fill="#fff" stroke="#cfe0f0"/><path fill="#2f75b5" d="M1076 271V263L1081 259 1086 264 1090 261 1095 264V271Z"/><circle cx="1091" cy="258" r="2" fill="#f3c96e"/>
<rect x="1077" y="286" width="16" height="15" fill="#2f75b5"/><rect x="1080" y="290" width="16" height="15" fill="#f3c96e"/>
<path class="p" d="M1078.500 319.500H1089L1093.500 324V338.500H1078.500Z"/><path d="M1084 326H1091M1084 329.500H1091M1084 333H1091" stroke="#2f75b5" stroke-width="1.300"/><path d="M1080 326H1082M1080 329.500H1082M1080 333H1082" stroke="#e8568a" stroke-width="1.300"/>
<circle cx="1085" cy="360" r="8.500" fill="#2f75b5"/><path fill="#fff" d="M1081 355L1086 353 1087 358 1083 360ZM1088 361L1091 363 1088 367Z"/><rect x="1082" y="365" width="6" height="4" rx="2" fill="#fff" stroke="#f3c96e" stroke-width="1.300"/><rect x="1089" y="365" width="6" height="4" rx="2" fill="#fff" stroke="#f3c96e" stroke-width="1.300"/>
<path class="p" d="M1078.500 386.500H1088L1092.500 391V404.500H1078.500Z"/><path class="b" d="M1082 401L1089 393 1090 395 1084 402 1082 401" style="stroke:#6fa3d6"/>
<path class="p" d="M1077.500 420.500H1094.500V432.500H1084L1081 436V432.500H1077.500Z"/><circle cx="1082" cy="426.500" r="1.100" fill="#2f75b5"/><circle cx="1086" cy="426.500" r="1.100" fill="#2f75b5"/><circle cx="1090" cy="426.500" r="1.100" fill="#2f75b5"/>
<circle cx="1085.500" cy="461.500" r="9.500" fill="#2f75b5"/><text x="1085.500" y="467" class="m" style="font-size:15px;font-weight:bold;fill:#fff">?</text>
<rect x="1108.500" y="155.500" width="310" height="193" fill="#fff" stroke="#eee"/>
<g fill="#fafafa" stroke="#eee">
<circle cx="1123.500" cy="176.500" r="5"/><circle cx="1123.500" cy="206.500" r="5"/><circle cx="1123.500" cy="236.500" r="5"/><circle cx="1123.500" cy="266.500" r="5"/><circle cx="1123.500" cy="296.500" r="5"/><circle cx="1123.500" cy="326.500" r="5"/>
</g>
<circle cx="1123.500" cy="206.500" r="2" fill="#aaa"/>
<text x="1134" y="181" class="g">无填充</text><text x="1134" y="211" class="g">单色填充</text><text x="1134" y="241" class="g">渐变填充</text><text x="1134" y="271" class="g">单色渐变填充</text><text x="1134" y="301" class="g">图案填充</text><text x="1134" y="331" class="g">图片或纹理填充</text>
<text x="1117" y="380" class="g">颜色：</text><text x="1117" y="414" class="g">亮度：</text><text x="1117" y="448" class="g">透明度：</text>
<rect x="1356.500" y="364.500" width="63" height="22" fill="#fff" stroke="#ccc"/><rect x="1362" y="369" width="47" height="13" fill="#dcdcdc"/><path d="M1411 374.500H1417L1414 378Z" fill="#bbb"/>
<path d="M1180 409.500H1325" stroke="#666"/><path d="M1325 409.500H1345" stroke="#ccc"/><circle cx="1325" cy="409.500" r="4" fill="#8ca8f4"/>
<path d="M1184 443.500H1345" stroke="#ccc"/><circle cx="1184" cy="443.500" r="4" fill="#8ca8f4"/>
<rect x="1356.500" y="398.500" width="63" height="22" fill="#fff" stroke="#ccc"/><rect x="1356.500" y="432.500" width="63" height="22" fill="#fff" stroke="#ccc"/>
<text x="1361" y="415" class="g" style="fill:#777">80 %</text><text x="1361" y="449" class="g" style="fill:#777">0 %</text>
<path class="ar" d="M1406 406L1408.500 403 1411 406ZM1406 412H1411L1408.500 415ZM1406 440L1408.500 437 1411 440ZM1406 446H1411L1408.500 449Z"/>

<!-- Status bar -->
<rect x="0" y="866" width="1440" height="34" fill="#2a6093"/>
<text x="11" y="888" class="w" style="font-size:14.300px;text-decoration:underline">http://www.edrawsoft.cn/</text>
<text x="175" y="888" class="w" style="font-size:12.500px">页1/1</text>
<rect x="1119" y="874" width="19" height="18" fill="#a9c2de"/>
<path class="wi" d="M1123.500 877.500H1133.500V888.500H1123.500ZM1125.500 880.500H1131.500M1125.500 883H1131.500M1125.500 885.500H1131.500"/>
<path class="wi" d="M1141.500 877.500H1152.500V888.500H1141.500ZM1145.500 877.500V888.500M1145.500 883H1152.500M1147.500 880.500H1150.500"/>
<path class="wi" d="M1160 877.500H1171M1161.500 878V884.500H1169.500V878M1165.500 884.500V889M1162.500 889H1168.500M1163.500 881H1167.500"/>
<path class="wi" d="M1180 883H1188M1292 883H1300M1296 879V887"/>
<path d="M1197 883H1286" stroke="#bbb" stroke-width="2"/>
<rect x="1217.500" y="876.500" width="6" height="12" fill="#fff" stroke="#bbb"/>
<text x="1313" y="888" class="w" style="font-size:13px">100%</text>
<path d="M1354 882H1360L1357 885.500Z" fill="#777"/>
<path class="wi" stroke-dasharray="1.500 1" style="stroke-width:1" d="M1367 877.500H1377.500V888.500H1367Z"/><path class="wi" d="M1369.500 880H1375V886H1369.500Z"/>
<path class="wi" d="M1385.500 878H1396.500V887.500H1385.500ZM1388 883H1394M1389 880.500V885.500M1393 880.500V885.500"/>
<path class="wi" stroke-dasharray="1.500 1" style="stroke-width:1" d="M1404 878H1415V888H1404Z"/><circle cx="1409" cy="882.500" r="2.800" class="wi"/><path class="wi" d="M1411 885L1416 890"/>
<path class="wi" style="stroke-width:1.200" d="M1423.500 877.500V888.500M1427.500 877.500V888.500M1431.500 877.500V888.500M1435 877.500V888.500M1423 880H1436M1423 883.500H1436M1423 887H1436"/>
</svg>
</body></html>
